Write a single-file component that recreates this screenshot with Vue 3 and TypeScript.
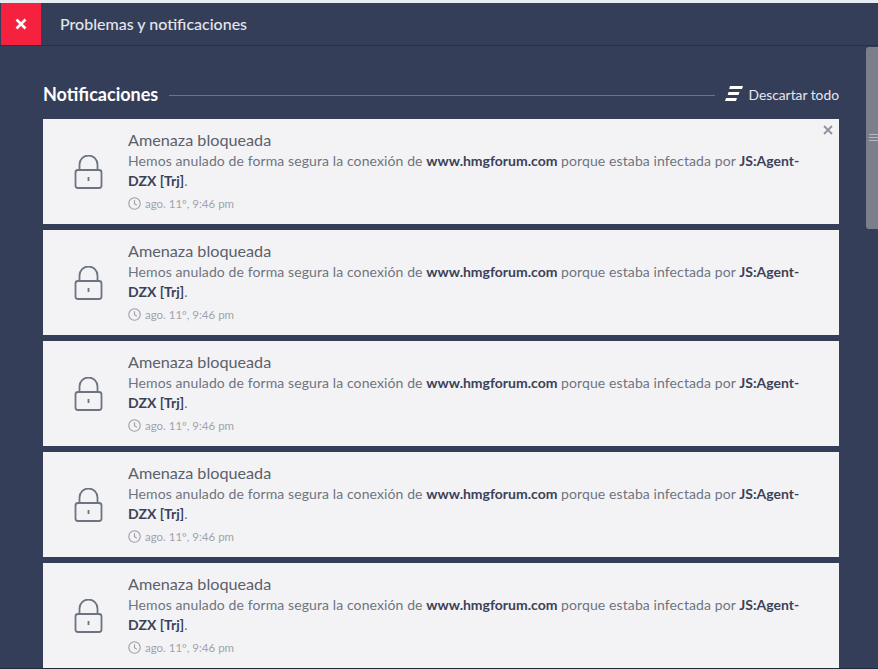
<script setup lang="ts">
const cards = [0, 1, 2, 3, 4]
</script>

<template>
  <div class="page">
    <header class="header">
      <button class="close" aria-label="Cerrar">
        <svg width="12" height="12" viewBox="0 0 12 12"><path d="M1.5 1.5l9 9M10.5 1.5l-9 9" stroke="#fff" stroke-width="2.6" fill="none" /></svg>
      </button>
      <h1 class="title">Problemas y notificaciones</h1>
    </header>
    <div class="body">
      <main class="content">
        <div class="section-head">
          <h2 class="section-title">Notificaciones</h2>
          <span class="rule"></span>
          <span class="dismiss">
            <svg width="18" height="18" viewBox="0 0 18 18"><path d="M5 1h13l-1 3H4.200zM3.500 7h11l-1 3H2.700zM1 13h11l-1 3H0z" fill="#fff" /></svg>
            Descartar todo
          </span>
        </div>
        <article v-for="c in cards" :key="c" class="card">
          <svg v-if="c === 0" class="dismiss-x" width="10" height="10" viewBox="0 0 10 10"><path d="M1 1l8 8M9 1l-8 8" stroke="#8f939c" stroke-width="1.8" fill="none" /></svg>
          <div class="lock">
            <svg width="30" height="36" viewBox="0.500 0 30 36" fill="none" stroke="#6d7480" stroke-width="1.8">
              <path d="M6 15V9.500a9 9 0 0 1 18 0V15" />
              <rect x="2" y="15" width="26" height="18" rx="2.500" />
              <path d="M15 22v4" stroke-width="1.800" />
            </svg>
          </div>
          <div class="text">
            <h3 class="card-title">Amenaza bloqueada</h3>
            <p class="desc">Hemos anulado de forma segura la conexión de <b>www.hmgforum.com</b> porque estaba infectada por <b>JS:Agent-</b><wbr /><b>DZX [Trj]</b>.</p>
            <div class="time">
              <svg width="13" height="13" viewBox="0 0 13 13" fill="none" stroke="#9a9ea6" stroke-width="1.100"><circle cx="6.500" cy="6.500" r="5.700" /><path d="M6.500 3.200v3.500l2.300 1.500" /></svg>
              ago. 11º, 9:46 pm
            </div>
          </div>
        </article>
      </main>
      <aside class="track">
        <div class="thumb"><span class="grip"></span></div>
      </aside>
    </div>
  </div>
</template>

<style scoped>
.page {
  width: 878px;
  height: 669px;
  box-sizing: border-box;
  overflow: hidden;
  background: #353e58;
  border-top: 3px solid #e6edf3;
  border-bottom: 1px solid #222a3d;
  font-family: Lato, "Open Sans", sans-serif;
  display: flex;
  flex-direction: column;
}
.header {
  height: 43px;
  flex: none;
  box-sizing: border-box;
  display: flex;
  align-items: center;
  border-bottom: 1px solid #2a3147;
  padding-left: 1px;
}
.close {
  width: 40px;
  height: 42px;
  border: 0;
  padding: 0;
  background: #f6203f;
  display: flex;
  align-items: center;
  justify-content: center;
}
.title {
  margin: 0 0 2px 19px;
  font-size: 16px;
  font-weight: 500;
  color: #e4e6ec;
}
.body {
  flex: 1;
  display: flex;
  min-height: 0;
}
.content {
  width: 796px;
  margin-left: 43px;
  flex: none;
}
.section-head {
  height: 73px;
  box-sizing: border-box;
  padding-top: 23px;
  display: flex;
  align-items: center;
}
.section-title {
  margin: 0;
  font-size: 18px;
  font-weight: 700;
  color: #fff;
}
.rule {
  flex: 1;
  height: 1px;
  background: #6d7389;
  margin: 2px 10px 0 11px;
}
.dismiss {
  display: flex;
  align-items: center;
  gap: 6px;
  font-size: 13.800px;
  color: #e6e8ee;
}
.card {
  position: relative;
  height: 105px;
  margin-bottom: 6px;
  background: #f3f3f6;
  display: flex;
}
.dismiss-x {
  position: absolute;
  top: 6px;
  right: 6px;
}
.lock {
  width: 85px;
  flex: none;
  padding: 36px 0 0 31px;
  box-sizing: border-box;
}
.text {
  width: 680px;
  padding-top: 11px;
}
.card-title {
  margin: 0;
  font-size: 16.200px;
  line-height: 19px;
  font-weight: 400;
  color: #5b606b;
}
.desc {
  margin: 2px 0 0;
  font-size: 14px;
  line-height: 20px;
  letter-spacing: 0.1px;
  color: #6f7480;
}
.desc b {
  font-weight: 700;
  letter-spacing: 0;
  color: #3c4256;
}
.time {
  margin-top: 6px;
  display: flex;
  align-items: center;
  gap: 4px;
  font-size: 11.500px;
  color: #a0a3aa;
}
.track {
  width: 12px;
  margin-left: 27px;
  flex: none;
  padding-top: 1px;
}
.thumb {
  position: relative;
  height: 182px;
  background: #7b7f8c;
  border-radius: 3px 0 0 3px;
}
.grip {
  position: absolute;
  left: 3px;
  top: 87px;
  width: 9px;
  height: 7px;
  background: repeating-linear-gradient(#b5b8c0 0 1px, transparent 1px 3px);
}
</style>
